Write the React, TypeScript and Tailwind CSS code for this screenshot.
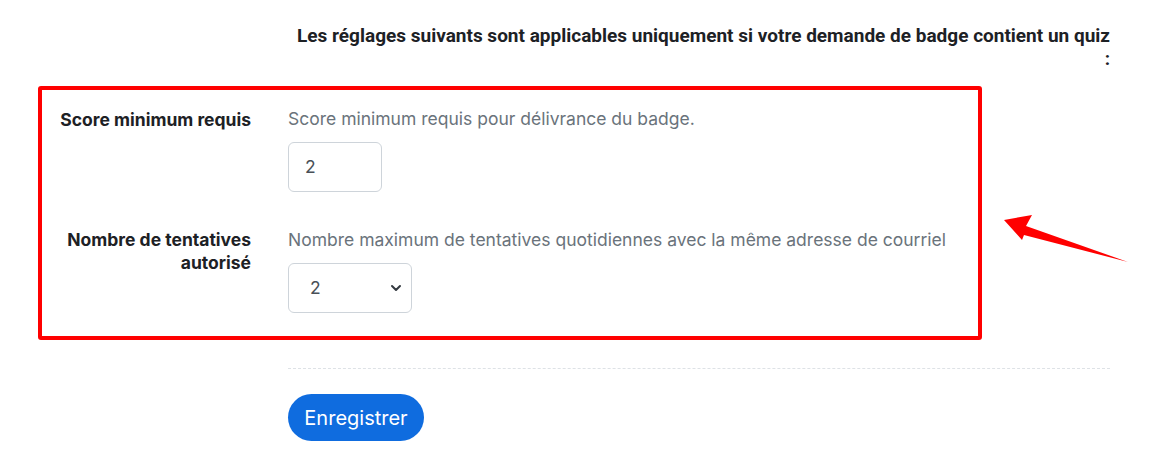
import { ChevronDown } from "lucide-react";

export default function App() {
  return (
    <div
      className="relative w-[1173px] h-[465px] bg-white text-[#1d2125] overflow-hidden"
      style={{ fontFamily: "Inter, 'Noto Sans', sans-serif" }}
    >
      {/* Quiz settings heading */}
      <div className="pl-[288px] pr-[63px] pt-[24px]">
        <p
          className="text-right text-[19px] leading-[23px] font-bold text-[#1d2125]"
          style={{ fontFamily: "'Roboto', 'Liberation Sans', sans-serif" }}
        >
          Les réglages suivants sont applicables uniquement si votre demande de badge contient un quiz
          <br />:
        </p>
      </div>

      {/* Highlighted settings */}
      <div className="ml-[38px] mt-[16px] w-[944px] h-[254px] border-4 border-[#ff0000] rounded-[3px] pt-[18px] text-[17.5px]">
        <div className="grid grid-cols-[209px_1fr] gap-x-[37px]">
          <label className="text-right leading-[24px] font-bold">
            Score minimum requis
          </label>
          <div>
            <p className="leading-[22px] text-[#6a737b]">
              Score minimum requis pour délivrance du badge.
            </p>
            <div className="mt-[12px] w-[94px] h-[50px] border border-[#ced4da] rounded-[6px] flex items-center pl-[16px] text-[#495057]">
              2
            </div>
          </div>
        </div>

        <div className="grid grid-cols-[209px_1fr] gap-x-[37px] mt-[36px]">
          <label className="text-right leading-[23px] font-bold">
            Nombre de tentatives autorisé
          </label>
          <div>
            <p className="leading-[24px] text-[#6a737b]">
              Nombre maximum de tentatives quotidiennes avec la même adresse de courriel
            </p>
            <div className="mt-[11px] w-[124px] h-[50px] border border-[#ced4da] rounded-[6px] flex items-center justify-between pl-[21px] pr-[7px] text-[#495057]">
              <span>2</span>
              <ChevronDown className="w-[16px] h-[16px] text-[#343a40]" strokeWidth={3} />
            </div>
          </div>
        </div>
      </div>

      <div className="ml-[288px] mr-[63px] mt-[28px] border-t border-dashed border-[#dee2e6]" />

      <div className="ml-[288px] mt-[25px]">
        <button className="h-[47px] w-[136px] rounded-full bg-[#0f6cdf] text-white text-[20px]">
          Enregistrer
        </button>
      </div>

      {/* Annotation arrow */}
      <svg className="absolute left-0 top-0" width="1173" height="465" viewBox="0 0 1173 465">
        <polygon
          points="1004,220 1032,215 1026,226 1128,262 1024,235 1022,240"
          fill="#ff0000"
        />
      </svg>
    </div>
  );
}
